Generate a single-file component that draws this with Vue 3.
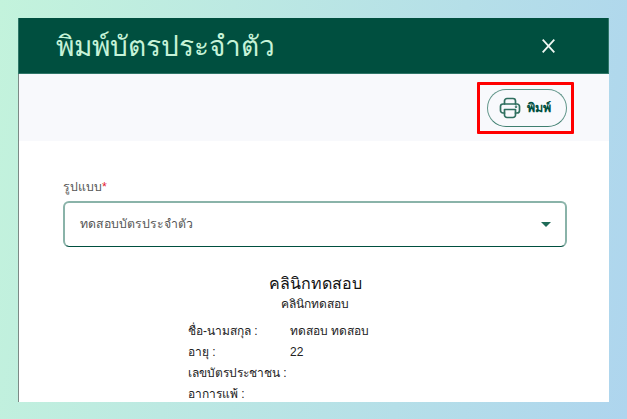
<script setup>
const rows = [
  ['ชื่อ-นามสกุล :', 'ทดสอบ ทดสอบ'],
  ['อายุ :', '22'],
  ['เลขบัตรประชาชน :', ''],
  ['อาการแพ้ :', '']
]
</script>

<template>
  <div class="page">
    <div class="dialog">
      <header class="head">
        <h1 class="title">พิมพ์บัตรประจำตัว</h1>
        <svg class="close" viewBox="0 0 13 14" width="13" height="14" aria-label="close">
          <path d="M0.7 0.7 L12.3 13.3 M12.3 0.7 L0.7 13.3" stroke="#eef7f2" stroke-width="1.8" fill="none" />
        </svg>
      </header>
      <div class="toolbar">
        <div class="highlight">
          <button class="print">
            <svg viewBox="0 0 24 24" width="24" height="24" fill="none" stroke="#2f6f5f" stroke-width="1.7" stroke-linejoin="round" stroke-linecap="round">
              <path d="M6.5 8V5a2.5 2.5 0 0 1 2.5-2.5h6A2.5 2.5 0 0 1 17.5 5v3" />
              <path d="M6.5 17H5a2.5 2.5 0 0 1-2.5-2.5v-4A2.5 2.5 0 0 1 5 8h14a2.5 2.5 0 0 1 2.5 2.5v4A2.5 2.5 0 0 1 19 17h-1.5" />
              <path d="M6.5 13.5h11V19a2.5 2.5 0 0 1-2.5 2.5H9A2.5 2.5 0 0 1 6.5 19z" />
              <circle cx="18" cy="10.8" r="0.4" />
            </svg>
            <span>พิมพ์</span>
          </button>
        </div>
      </div>
      <main class="content">
        <label class="label">รูปแบบ<b>*</b></label>
        <div class="select">
          <span>ทดสอบบัตรประจำตัว</span>
          <i class="caret"></i>
        </div>
        <section class="card">
          <h2>คลินิกทดสอบ</h2>
          <p class="sub">คลินิกทดสอบ</p>
          <div class="rows">
            <div v-for="r in rows" :key="r[0]" class="row">
              <span class="k">{{ r[0] }}</span>
              <span class="v">{{ r[1] }}</span>
            </div>
          </div>
        </section>
      </main>
    </div>
  </div>
</template>

<style>
html, body { margin: 0; height: 100%; overflow: hidden; }
</style>

<style scoped>
.page {
  box-sizing: border-box;
  width: 627px;
  height: 419px;
  padding: 18px 18px 17px 18px;
  background: linear-gradient(100deg, #c3f3dc 0%, #aed5ee 100%);
  font-family: "Liberation Sans", sans-serif;
}
.dialog {
  height: 100%;
  background: #fff;
  overflow: hidden;
  display: flex;
  flex-direction: column;
  box-shadow: inset 1px 0 #7c8a86;
}
.head {
  height: 56px;
  flex: none;
  box-sizing: border-box;
  display: flex;
  align-items: center;
  justify-content: space-between;
  padding: 0 54px 0 38px;
  background: #004f3f;
  box-shadow: inset -1px 0 #2f7668, inset 1px 0 #2f7668, inset 0 -1px #2f7668;
}
.title {
  margin: 0;
  font-size: 28px;
  font-weight: 400;
  color: #c6f3d8;
}
.toolbar {
  height: 67px;
  flex: none;
  display: flex;
  justify-content: flex-end;
  align-items: center;
  padding-right: 35px;
  margin-left: 1px;
  background: #f8f9fc;
}
.highlight {
  border: 3px solid #f00;
  padding: 4px 4px 4px 7px;
  display: flex;
  border-radius: 1px;
}
.print {
  width: 80px;
  height: 38px;
  box-sizing: border-box;
  border: 1px solid #5f9488;
  border-bottom-color: #3f7f70;
  border-radius: 19px;
  background: transparent;
  display: flex;
  align-items: center;
  gap: 5px;
  padding: 0 0 0 10px;
  font: 700 12.5px "Liberation Sans", sans-serif;
  color: #004f3f;
}
.content {
  flex: 1;
  padding: 38px 42px 0 45px;
}
.label {
  display: block;
  font-size: 12.3px;
  line-height: 16px;
  color: #555;
  margin-bottom: 6px;
}
.label b { color: #e5202e; font-weight: 400; }
.select {
  box-sizing: border-box;
  height: 46px;
  border: 2px solid #8ab3a9;
  border-bottom: 1px solid #004f3f;
  border-radius: 6px;
  display: flex;
  align-items: center;
  justify-content: space-between;
  padding: 0 14px 2px 15px;
  font-size: 12.3px;
  color: #555;
}
.caret {
  width: 0;
  height: 0;
  margin-top: 2px;
  border-left: 5px solid transparent;
  border-right: 5px solid transparent;
  border-top: 5px solid #1f6b58;
}
.card {
  margin-top: 26px;
  color: #222;
}
.card h2 {
  margin: 0;
  text-align: center;
  font-size: 16px;
  font-weight: 400;
  line-height: 22px;
  color: #111;
}
.sub {
  margin: 0 0 9px;
  text-align: center;
  font-size: 12px;
  line-height: 18px;
}
.rows { padding-left: 125px; }
.row {
  display: flex;
  height: 21px;
  font-size: 12px;
  line-height: 18px;
}
.k { width: 102px; flex: none; white-space: nowrap; }
</style>
